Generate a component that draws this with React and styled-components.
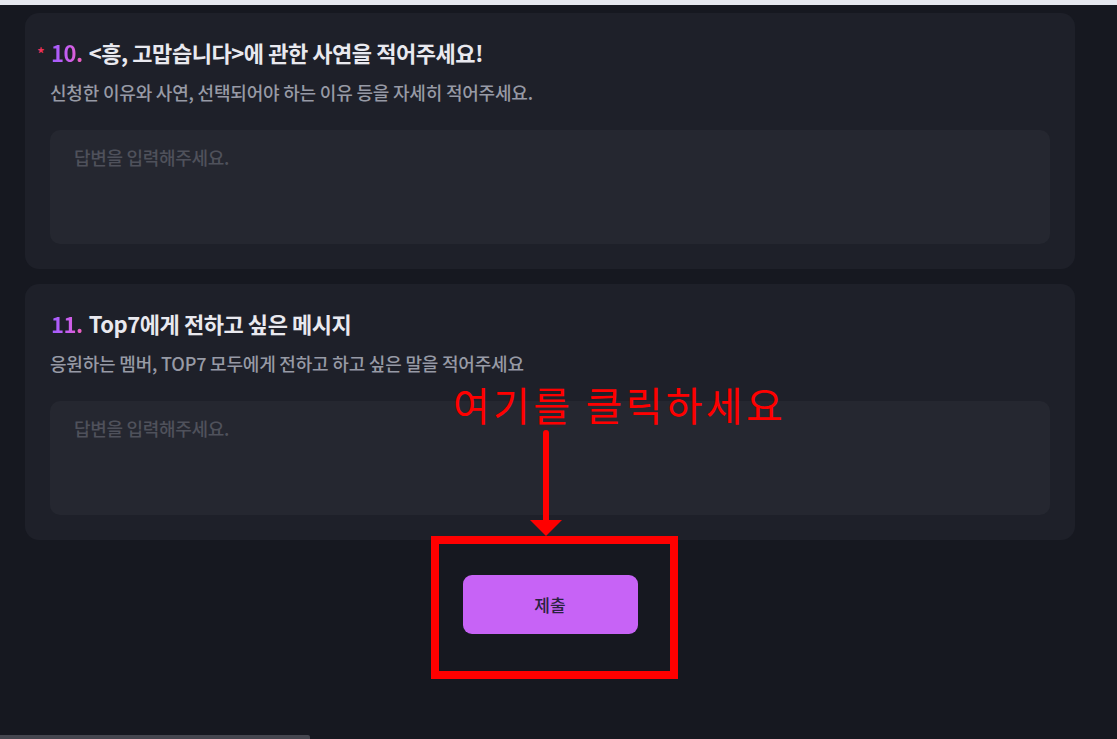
import React from "react";
import styled, { createGlobalStyle } from "styled-components";

const Global = createGlobalStyle`
  html, body { margin: 0; padding: 0; background: #161820; }
  body { font-family: "Noto Sans CJK KR", "Noto Sans", sans-serif; overflow: hidden; }
  * { box-sizing: border-box; }
`;

const Page = styled.div`
  position: relative;
  width: 1117px;
  height: 739px;
  background: #161820;
  overflow: hidden;
`;

const TopStrip = styled.div`
  height: 5px;
  background: #e6e8ef;
`;

const Content = styled.main`
  width: 1050px;
  margin-left: 25px;
  padding-top: 8px;
  display: flex;
  flex-direction: column;
  gap: 15px;
`;

const Card = styled.section`
  background: #1e2029;
  border-radius: 14px;
  padding: 25px;
  display: flex;
  flex-direction: column;
`;

const Title = styled.h2`
  position: relative;
  margin: 0 0 15px 1px;
  font-size: 22px;
  line-height: 28px;
  font-weight: 700;
  color: #e9e9ef;
  letter-spacing: -0.45px;
`;

const Required = styled.span`
  position: absolute;
  left: -14px;
  top: 1px;
  color: #f0325a;
  font-size: 16px;
  font-weight: 500;
`;

const Num = styled.span`
  background: linear-gradient(90deg, #9f5cff 0%, #c85ef0 55%, #f05fb8 100%);
  -webkit-background-clip: text;
  background-clip: text;
  color: transparent;
  margin-right: 6px;
`;

const Sub = styled.p`
  margin: 0 0 27px 0;
  font-size: 18px;
  line-height: 22px;
  font-weight: 500;
  color: #979aa5;
  letter-spacing: -0.2px;
`;

const Answer = styled.textarea`
  display: block;
  width: 100%;
  height: 114px;
  resize: none;
  border: none;
  outline: none;
  border-radius: 10px;
  background: #252730;
  padding: 16px 24px;
  font-family: inherit;
  font-size: 18px;
  line-height: 22px;
  font-weight: 500;
  letter-spacing: -0.3px;
  color: #d0d0d8;
  &::placeholder { color: #4f515b; }
`;

const Footer = styled.div`
  display: flex;
  justify-content: center;
  padding-top: 20px;
`;

const Submit = styled.button`
  width: 175px;
  height: 59px;
  border: none;
  border-radius: 9px;
  background: #c763f6;
  color: #2a2240;
  font-family: inherit;
  font-size: 17px;
  font-weight: 500;
  cursor: pointer;
`;

const Callout = styled.div`
  position: absolute;
  left: 453px;
  top: 378px;
  color: #ff0000;
  font-family: "Noto Sans CJK KR", sans-serif;
  font-weight: 400;
  font-size: 40px;
  line-height: 52px;
  letter-spacing: 3.3px;
  white-space: nowrap;
`;

const Arrow = styled.svg`
  position: absolute;
  left: 526px;
  top: 428px;
`;

const HighlightBox = styled.div`
  position: absolute;
  left: 431px;
  top: 536px;
  width: 247px;
  height: 143px;
  border: 8px solid #ff0000;
`;

const ScrollThumb = styled.div`
  position: absolute;
  left: 0;
  bottom: 0;
  width: 310px;
  height: 4px;
  background: #45464f;
  border-top-right-radius: 2px;
`;

const questions = [
  {
    n: "10.",
    required: true,
    title: "<흥, 고맙습니다>에 관한 사연을 적어주세요!",
    sub: "신청한 이유와 사연, 선택되어야 하는 이유 등을 자세히 적어주세요.",
  },
  {
    n: "11.",
    required: false,
    title: "Top7에게 전하고 싶은 메시지",
    sub: "응원하는 멤버, TOP7 모두에게 전하고 하고 싶은 말을 적어주세요",
  },
];

export default function App() {
  return (
    <>
      <Global />
      <Page>
        <TopStrip />
        <Content>
          {questions.map((q) => (
            <Card key={q.n}>
              <Title>
                {q.required && <Required>*</Required>}
                <Num>{q.n}</Num>
                {q.title}
              </Title>
              <Sub>{q.sub}</Sub>
              <Answer placeholder="답변을 입력해주세요." />
            </Card>
          ))}
          <Footer>
            <Submit>제출</Submit>
          </Footer>
        </Content>
        <Callout>여기를 클릭하세요</Callout>
        <Arrow width="40" height="110" viewBox="0 0 40 110">
          <line x1="20" y1="5" x2="20" y2="94" stroke="#ff0000" strokeWidth="6" strokeLinecap="round" />
          <polygon points="4,92 36,92 20,108" fill="#ff0000" />
        </Arrow>
        <HighlightBox />
        <ScrollThumb />
      </Page>
    </>
  );
}
